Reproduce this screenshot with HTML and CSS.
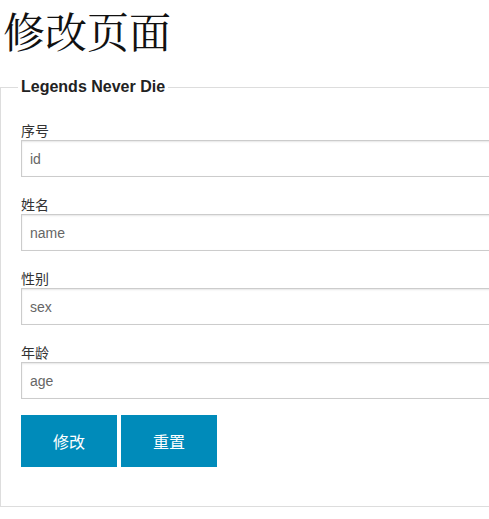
FILE: index.html
```html
<!DOCTYPE html>
<html lang="zh">
<head>
<meta charset="utf-8">
<title>修改页面</title>
<link rel="stylesheet" href="styles.css">
</head>
<body>
<h1 class="title">修改页面</h1>
<form class="form">
  <fieldset class="box">
    <legend class="legend">Legends Never Die</legend>
    <div class="group">
      <label class="label">序号</label>
      <input class="field" type="text" placeholder="id">
    </div>
    <div class="group">
      <label class="label">姓名</label>
      <input class="field" type="text" placeholder="name">
    </div>
    <div class="group">
      <label class="label">性别</label>
      <input class="field" type="text" placeholder="sex">
    </div>
    <div class="group">
      <label class="label">年龄</label>
      <input class="field" type="text" placeholder="age">
    </div>
    <div class="actions">
      <button class="btn" type="button">修改</button>
      <button class="btn" type="reset">重置</button>
    </div>
  </fieldset>
</form>
</body>
</html>
```
FILE: styles.css
```css
html {
  overflow: hidden;
}
body {
  margin: 0;
  font-family: "Liberation Sans", "Noto Sans CJK SC", sans-serif;
  color: #333;
  background: #fff;
}
.title {
  margin: 0 0 17px 0;
  padding-left: 3px;
  font-family: "Noto Serif CJK SC", "Liberation Serif", "Noto Sans CJK SC", serif;
  font-weight: normal;
  font-size: 42px;
  line-height: 60px;
  color: #111;
}
.form {
  margin: 0;
  width: 640px;
}
.box {
  margin: 0;
  padding: 23px 20px 39px 20px;
  border: 1px solid #ddd;
  min-width: 0;
}
.legend {
  padding: 0 3px;
  margin-left: -3px;
  font-size: 16px;
  line-height: 20px;
  font-weight: bold;
  color: #222;
}
.group {
  display: flex;
  flex-direction: column;
  margin-bottom: 17px;
}
.label {
  font-size: 14px;
  line-height: 20px;
  color: #333;
  font-family: "Noto Sans CJK SC", sans-serif;
}
.field {
  box-sizing: border-box;
  height: 37px;
  width: 100%;
  margin: 0;
  padding: 0 8px;
  border: 1px solid #ccc;
  box-shadow: inset 0 1px 2px rgba(0, 0, 0, 0.1);
  font-family: "Liberation Sans", sans-serif;
  font-size: 14px;
  color: #555;
  background: #fff;
  outline: none;
}
.field::placeholder {
  color: #666;
  opacity: 1;
}
.actions {
  display: flex;
  gap: 4px;
  margin-top: -1px;
}
.btn {
  width: 96px;
  height: 52px;
  margin: 0;
  border: none;
  background: #008bba;
  color: #fff;
  font-family: "Noto Sans CJK SC", sans-serif;
  font-size: 16px;
}
```
